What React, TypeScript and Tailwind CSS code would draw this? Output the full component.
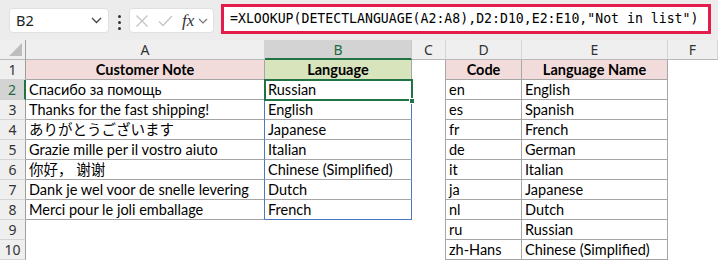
import React from "react";

const G = "border-[#a6a6a6]";

type CellProps = { className?: string; children?: React.ReactNode };
function Cell({ className = "", children }: CellProps) {
  return (
    <div
      className={
        "h-[20px] flex items-center px-[3px] overflow-hidden whitespace-nowrap text-[14.5px] text-black font-['Lato','Noto_Sans_CJK_JP',sans-serif] " +
        className
      }
    >
      {children}
    </div>
  );
}

const aCol = [
  "Спасибо за помощь",
  "Thanks for the fast shipping!",
  "ありがとうございます",
  "Grazie mille per il vostro aiuto",
  "你好， 谢谢",
  "Dank je wel voor de snelle levering",
  "Merci pour le joli emballage",
];
const bCol = ["Russian", "English", "Japanese", "Italian", "Chinese (Simplified)", "Dutch", "French"];
const dCol = ["en", "es", "fr", "de", "it", "ja", "nl", "ru", "zh-Hans"];
const eCol = ["English", "Spanish", "French", "German", "Italian", "Japanese", "Dutch", "Russian", "Chinese (Simplified)"];

function ColHead({ label, selected }: { label: string; selected?: boolean }) {
  return selected ? (
    <div className="h-[20px] flex items-center justify-center bg-[#d3d3d3] border-r border-[#c8c8c8] border-b-2 border-b-[#217346] text-[#1d6b3d] text-[14px] font-['Noto_Sans',sans-serif]">
      {label}
    </div>
  ) : (
    <div className="h-[20px] flex items-center justify-center bg-[#efefef] border-r border-[#d4d4d4] border-b border-b-[#b8b8b8] text-[#333] text-[14px] font-['Noto_Sans',sans-serif]">
      {label}
    </div>
  );
}

function RowHead({ n }: { n: number }) {
  return n === 2 ? (
    <div className="h-[20px] flex items-center justify-center bg-[#d3d3d3] border-r-2 border-r-[#217346] border-b border-b-[#cfcfcf] text-[#1d6b3d] text-[14px] font-['Noto_Sans',sans-serif]">
      {n}
    </div>
  ) : (
    <div className="h-[20px] flex items-center justify-center bg-[#efefef] border-r border-r-[#9e9e9e] border-b border-b-[#d4d4d4] text-[#333] text-[14px] font-['Noto_Sans',sans-serif]">
      {n}
    </div>
  );
}

export default function App() {
  const rows: React.ReactNode[] = [];
  for (let r = 1; r <= 10; r++) {
    rows.push(<RowHead key={"rh" + r} n={r} />);
    // A
    if (r === 1)
      rows.push(
        <Cell key={"a" + r} className={"justify-center font-bold bg-[#f2dcdb] border-r border-b " + G}>
          Customer Note
        </Cell>
      );
    else if (r <= 8)
      rows.push(
        <Cell key={"a" + r} className={"border-r border-b " + G + " border-r-[#4a78c2]"}>
          {aCol[r - 2]}
        </Cell>
      );
    else rows.push(<Cell key={"a" + r} />);
    // B
    if (r === 1)
      rows.push(
        <Cell key={"b" + r} className={"justify-center font-bold bg-[#d8e4bc] border-r border-b " + G}>
          Language
        </Cell>
      );
    else if (r === 2)
      rows.push(
        <div key="b2" className="relative">
          <Cell className={"border-r border-b " + G + " border-r-[#4a78c2]"}>{bCol[0]}</Cell>
          <div className="absolute -left-[1px] -top-[1px] -right-[1px] -bottom-[1px] border-2 border-[#217346] z-10" />
          <div className="absolute -right-[3px] -bottom-[4px] w-[6px] h-[6px] bg-[#217346] border border-white z-20" />
        </div>
      );
    else if (r < 8)
      rows.push(
        <Cell key={"b" + r} className={"border-r border-b " + G + " border-r-[#4a78c2]"}>
          {bCol[r - 2]}
        </Cell>
      );
    else if (r === 8)
      rows.push(
        <Cell key={"b" + r} className="border-r border-b border-[#4a78c2]">
          {bCol[r - 2]}
        </Cell>
      );
    else rows.push(<Cell key={"b" + r} />);
    // C
    rows.push(<Cell key={"c" + r} className={"border-r " + G} />);
    // D, E
    if (r === 1) {
      rows.push(
        <Cell key="d1" className={"justify-center font-bold bg-[#f2dcdb] border-r border-b " + G}>
          Code
        </Cell>
      );
      rows.push(
        <Cell key="e1" className={"justify-center font-bold bg-[#f2dcdb] border-r border-b " + G}>
          Language Name
        </Cell>
      );
    } else {
      rows.push(
        <Cell key={"d" + r} className={"border-r border-b " + G}>
          {dCol[r - 2]}
        </Cell>
      );
      rows.push(
        <Cell key={"e" + r} className={"border-r border-b " + G}>
          {eCol[r - 2]}
        </Cell>
      );
    }
    rows.push(<Cell key={"f" + r} />);
  }

  return (
    <div className="w-[718px] h-[262px] overflow-hidden bg-white">
      {/* Formula bar */}
      <div className="h-[40px] bg-[#ececec] flex items-start">
        <div className="ml-[9px] mt-[8px] w-[100px] h-[25px] bg-white rounded-[4px] border border-[#e0e0e0] flex items-center justify-between pl-[6px] pr-[6px]">
          <span className="text-[14.5px] text-[#222] font-['Noto_Sans',sans-serif]">B2</span>
          <svg width="11" height="7" viewBox="0 0 11 7" fill="none" stroke="#444" strokeWidth="1.3">
            <path d="M1 1l4.5 4.5L10 1" />
          </svg>
        </div>
        <div className="ml-[9px] mt-[15px] flex flex-col gap-[3px]">
          <div className="w-[3px] h-[3px] rounded-full bg-[#333]" />
          <div className="w-[3px] h-[3px] rounded-full bg-[#333]" />
          <div className="w-[3px] h-[3px] rounded-full bg-[#333]" />
        </div>
        <div className="ml-[8px] mt-[8px] w-[85px] h-[25px] bg-white rounded-[4px] border border-[#e0e0e0] flex items-center pl-[5px]">
          <svg width="14" height="14" viewBox="0 0 14 14" fill="none" stroke="#c4c4c4" strokeWidth="1.3">
            <path d="M1.5 1.5l11 11M12.5 1.5l-11 11" />
          </svg>
          <svg className="ml-[9px]" width="15" height="12" viewBox="0 0 15 12" fill="none" stroke="#c4c4c4" strokeWidth="1.3">
            <path d="M1 6.5l4 4L14 1" />
          </svg>
          <span className="ml-[9px] italic text-[17px] leading-none text-[#333] font-['Liberation_Serif',serif]">fx</span>
          <svg className="ml-[4px]" width="10" height="6" viewBox="0 0 10 6" fill="none" stroke="#777" strokeWidth="1.2">
            <path d="M1 1l4 4 4-4" />
          </svg>
        </div>
        <div className="ml-[7px] mt-[4px] w-[490px] h-[30px] bg-white border-[3px] border-[#e31c4c] flex items-center pl-[6px]">
          <span className="text-[13.2px] text-black whitespace-nowrap font-['DejaVu_Sans_Mono',monospace]">
            =XLOOKUP(DETECTLANGUAGE(A2:A8),D2:D10,E2:E10,"Not in list")
          </span>
        </div>
      </div>
      {/* Grid */}
      <div className="grid grid-cols-[26px_239px_147px_34px_76px_146px_50px]">
        <div className="h-[20px] bg-[#efefef] border-r border-r-[#9e9e9e] border-b border-b-[#b8b8b8] flex items-end justify-end pr-[3px] pb-[3px]">
          <div className="w-[13px] h-[13px] bg-[#bdbdbd] [clip-path:polygon(100%_0,100%_100%,0_100%)]" />
        </div>
        <ColHead label="A" />
        <ColHead label="B" selected />
        <ColHead label="C" />
        <ColHead label="D" />
        <ColHead label="E" />
        <ColHead label="F" />
        {rows}
      </div>
    </div>
  );
}
